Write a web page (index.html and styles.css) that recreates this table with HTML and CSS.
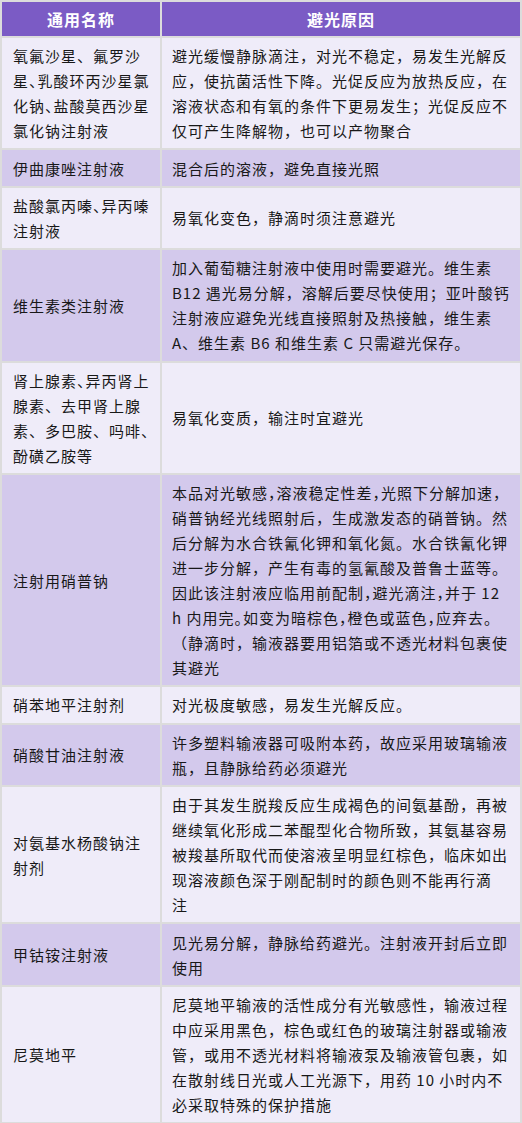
FILE: index.html
```html
<!DOCTYPE html>
<html lang="zh-CN">
<head>
<meta charset="utf-8">
<title>避光药物</title>
<link rel="stylesheet" href="styles.css">
</head>
<body>
<table class="drug-table">
  <thead>
    <tr>
      <th class="col-name">通用名称</th>
      <th class="col-reason">避光原因</th>
    </tr>
  </thead>
  <tbody>
    <tr class="light">
      <td>氧氟沙星、氟罗沙<br>星<span class="compact">、</span>乳酸环丙沙星氯<br>化钠<span class="compact">、</span>盐酸莫西沙星<br>氯化钠注射液</td>
      <td>避光缓慢静脉滴注，对光不稳定，易发生光解反<br>应，使抗菌活性下降。光促反应为放热反应，在<br>溶液状态和有氧的条件下更易发生；光促反应不<br>仅可产生降解物，也可以产物聚合</td>
    </tr>
    <tr class="dark">
      <td>伊曲康唑注射液</td>
      <td>混合后的溶液，避免直接光照</td>
    </tr>
    <tr class="light">
      <td>盐酸氯丙嗪<span class="compact">、</span>异丙嗪<br>注射液</td>
      <td>易氧化变色，静滴时须注意避光</td>
    </tr>
    <tr class="dark">
      <td>维生素类注射液</td>
      <td>加入葡萄糖注射液中使用时需要避光。维生素<br>B12 遇光易分解，溶解后要尽快使用；亚叶酸钙<br>注射液应避免光线直接照射及热接触，维生素<br>A、维生素 B6 和维生素 C 只需避光保存。</td>
    </tr>
    <tr class="light">
      <td>肾上腺素<span class="compact">、</span>异丙肾上<br>腺素、去甲肾上腺<br>素、多巴胺、吗啡<span class="compact">、</span><br>酚磺乙胺等</td>
      <td>易氧化变质，输注时宜避光</td>
    </tr>
    <tr class="dark">
      <td>注射用硝普钠</td>
      <td><span class="compact">本品对光敏感，溶液稳定性差，光照下分解加速，</span><br>硝普钠经光线照射后，生成激发态的硝普钠。然<br>后分解为水合铁氰化钾和氧化氮。水合铁氰化钾<br>进一步分解，产生有毒的氢氰酸及普鲁士蓝等。<br><span class="compact">因此该注射液应临用前配制，避光滴注，并于 12</span><br><span class="compact">h 内用完。如变为暗棕色，橙色或蓝色，应弃去。</span><br>（静滴时，输液器要用铝箔或不透光材料包裹使<br>其避光</td>
    </tr>
    <tr class="light">
      <td>硝苯地平注射剂</td>
      <td>对光极度敏感，易发生光解反应。</td>
    </tr>
    <tr class="dark">
      <td>硝酸甘油注射液</td>
      <td>许多塑料输液器可吸附本药，故应采用玻璃输液<br>瓶，且静脉给药必须避光</td>
    </tr>
    <tr class="light">
      <td>对氨基水杨酸钠注<br>射剂</td>
      <td>由于其发生脱羧反应生成褐色的间氨基酚，再被<br>继续氧化形成二苯醌型化合物所致，其氨基容易<br>被羧基所取代而使溶液呈明显红棕色，临床如出<br>现溶液颜色深于刚配制时的颜色则不能再行滴<br>注</td>
    </tr>
    <tr class="dark">
      <td>甲钴铵注射液</td>
      <td>见光易分解，静脉给药避光。注射液开封后立即<br>使用</td>
    </tr>
    <tr class="light">
      <td>尼莫地平</td>
      <td>尼莫地平输液的活性成分有光敏感性，输液过程<br>中应采用黑色，棕色或红色的玻璃注射器或输液<br>管，或用不透光材料将输液泵及输液管包裹，如<br>在散射线日光或人工光源下，用药 10 小时内不<br>必采取特殊的保护措施</td>
    </tr>
  </tbody>
</table>
</body>
</html>
```

FILE: styles.css
```css
html, body {
  margin: 0;
  padding: 0;
  background: #efecf9;
}

.drug-table {
  width: 522px;
  border-collapse: separate;
  border-spacing: 2px;
  background: #dcdcdc;
  font-family: "Noto Sans CJK SC", "Noto Sans", sans-serif;
  font-size: 15px;
  letter-spacing: 1px;
  color: #181818;
  table-layout: fixed;
}

.col-name {
  width: 158px;
}

.drug-table th {
  background: #7b5bc5;
  color: #ffffff;
  font-weight: 700;
  font-size: 16px;
  height: 34px;
  padding: 0;
  text-align: center;
  vertical-align: middle;
}

.drug-table td {
  padding: 5.2px 2px 5.2px 10px;
  line-height: 25px;
  vertical-align: middle;
  text-align: left;
  white-space: nowrap;
}

.drug-table td:first-child {
  padding-left: 11px;
}

.light td {
  background: #efecf9;
}

.dark td {
  background: #d3c9ec;
}

.compact {
  font-feature-settings: "halt";
}
```
